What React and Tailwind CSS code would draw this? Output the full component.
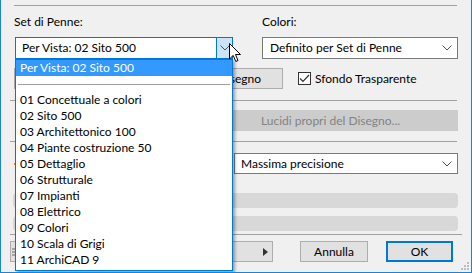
import React from 'react';

const items = [
  '01 Concettuale a colori',
  '02 Sito 500',
  '03 Architettonico 100',
  '04 Piante costruzione 50',
  '05 Dettaglio',
  '06 Strutturale',
  '07 Impianti',
  '08 Elettrico',
  '09 Colori',
  '10 Scala di Grigi',
  '11 ArchiCAD 9',
];

const Chevron = () => (
  <svg width="10" height="6" viewBox="0 0 10 6" fill="none">
    <path d="M0.5 0.5 L5 5 L9.5 0.5" stroke="#505050" strokeWidth="1" />
  </svg>
);

const App = () => {
  return (
    <div className="relative w-[472px] h-[273px] overflow-hidden bg-[#f0f0f0] border-x border-b border-[#1883d7] flex flex-col pl-[9px] pr-[13px] text-[12px] leading-4 text-black font-['Lato',sans-serif]">
      {/* top separator */}
      <div className="ml-[4px] mr-[1px] mt-[5px] h-px bg-[#a0a0a0]" />

      {/* Set di Penne / Colori */}
      <div className="mt-[8px] flex pl-[5px]">
        <div className="w-[218px] flex flex-col">
          <div className="h-4 -ml-px">Set di Penne:</div>
          <div className="mt-[7px] h-[22px] flex border border-[#0078d7] bg-white">
            <div className="flex-1 flex items-center pl-[6px]">Per Vista: 02 Sito 500</div>
            <div className="w-[16px] flex items-center justify-center border-l border-[#0078d7] bg-[#cce4f7]">
              <Chevron />
            </div>
          </div>
        </div>
        <div className="ml-[29px] w-[196px] flex flex-col">
          <div className="h-4">Colori:</div>
          <div className="mt-[7px] h-[22px] flex items-center justify-between border border-[#7a7a7a] bg-white pl-[7px] pr-[5px]">
            <span>Definito per Set di Penne</span>
            <Chevron />
          </div>
        </div>
      </div>

      {/* Lucidi del Disegno + checkbox */}
      <div className="mt-[9px] h-[21px] flex items-center">
        <div className="ml-[4px] w-[269px] h-full flex items-center justify-end pr-[21px] bg-[#e1e1e1] border border-[#adadad]">
          Lucidi del Disegno
        </div>
        <div className="ml-[15px] w-[13px] h-[13px] border border-[#333333] bg-white flex items-center justify-center">
          <svg width="11" height="9" viewBox="0 0 11 9" fill="none">
            <path d="M1 4.5 L4 7.5 L10 1" stroke="#333333" strokeWidth="1.2" />
          </svg>
        </div>
        <span className="ml-[4px]">Sfondo Trasparente</span>
      </div>

      <div className="mt-[11px] mr-[1px] h-px bg-[#a0a0a0]" />

      {/* disabled button */}
      <div className="mt-[9px] ml-auto w-[255px] h-[21px] flex items-center justify-center bg-[#cccccc] text-[#838383]">
        Lucidi propri del Disegno...
      </div>

      <div className="mt-[10px] mr-[1px] h-px bg-[#a0a0a0]" />

      {/* precisione */}
      <div className="mt-[11px] h-[21px] flex items-center">
        <div className="flex-1 flex items-center pl-[4px]">
          <div className="w-[2px] h-[2px] bg-[#e08a1e]" />
        </div>
        <div className="w-[224px] h-full flex items-center justify-between border border-[#7a7a7a] bg-white pl-[6px] pr-[5px]">
          <span>Massima precisione</span>
          <Chevron />
        </div>
      </div>

      <div className="mt-[19px] ml-[3px] h-[15px] rounded-[4px] bg-[#d8d8d8]" />
      <div className="mt-[8px] ml-[3px] h-[15px] rounded-[4px] bg-[#d8d8d8]" />

      <div className="mt-[3px] -mr-[4px] h-px bg-[#a0a0a0]" />

      {/* bottom buttons */}
      <div className="mt-[6px] h-[21px] flex">
        <div className="w-[263px] h-full flex items-center justify-between bg-[#e1e1e1] border border-[#adadad] pl-[1px] pr-[4px]">
          <svg width="6" height="10" viewBox="0 0 6 10">
            <path d="M0 2 H6 M0 5 H6 M0 8 H6" stroke="#6b6b6b" strokeWidth="1" />
          </svg>
          <svg width="5" height="8" viewBox="0 0 5 8">
            <path d="M0 0 L5 4 L0 8 Z" fill="#333333" />
          </svg>
        </div>
        <div className="ml-[27px] w-[68px] h-full flex items-center justify-center bg-[#e1e1e1] border border-[#adadad]">
          Annulla
        </div>
        <div className="ml-[18px] w-[67px] h-full flex items-center justify-center bg-[#e1e1e1] border-2 border-[#0078d7]">
          OK
        </div>
      </div>

      {/* resize grip */}
      <svg className="absolute right-[2px] bottom-[2px]" width="9" height="9" viewBox="0 0 9 9">
        <rect x="7" y="1" width="2" height="2" fill="#bdbdbd" />
        <rect x="4" y="4" width="2" height="2" fill="#bdbdbd" />
        <rect x="7" y="4" width="2" height="2" fill="#bdbdbd" />
        <rect x="1" y="7" width="2" height="2" fill="#bdbdbd" />
        <rect x="4" y="7" width="2" height="2" fill="#bdbdbd" />
        <rect x="7" y="7" width="2" height="2" fill="#bdbdbd" />
      </svg>

      {/* open dropdown list */}
      <div className="absolute left-[14px] top-[59px] w-[218px] h-[212px] flex flex-col border border-[#0078d7] bg-white shadow-[2px_2px_3px_rgba(0,0,0,0.35)]">
        <div className="h-4 pl-[4px] bg-[#3399ff] text-white">Per Vista: 02 Sito 500</div>
        <div className="h-4 pt-[8px] px-[2px]">
          <div className="h-px bg-[#a0a0a0]" />
        </div>
        {items.map((item) => (
          <div key={item} className="h-4 pl-[4px]">{item}</div>
        ))}
      </div>

      {/* mouse cursor */}
      <svg className="absolute left-[228px] top-[43px]" width="13" height="20" viewBox="0 0 13 20">
        <path
          d="M0.5 0.5 L0.5 16 L4.2 12.4 L6.8 18.5 L9 17.5 L6.5 11.5 L11.5 11.5 Z"
          fill="#ffffff"
          stroke="#000000"
          strokeWidth="1"
          strokeLinejoin="miter"
        />
      </svg>
    </div>
  );
};

export default App;
